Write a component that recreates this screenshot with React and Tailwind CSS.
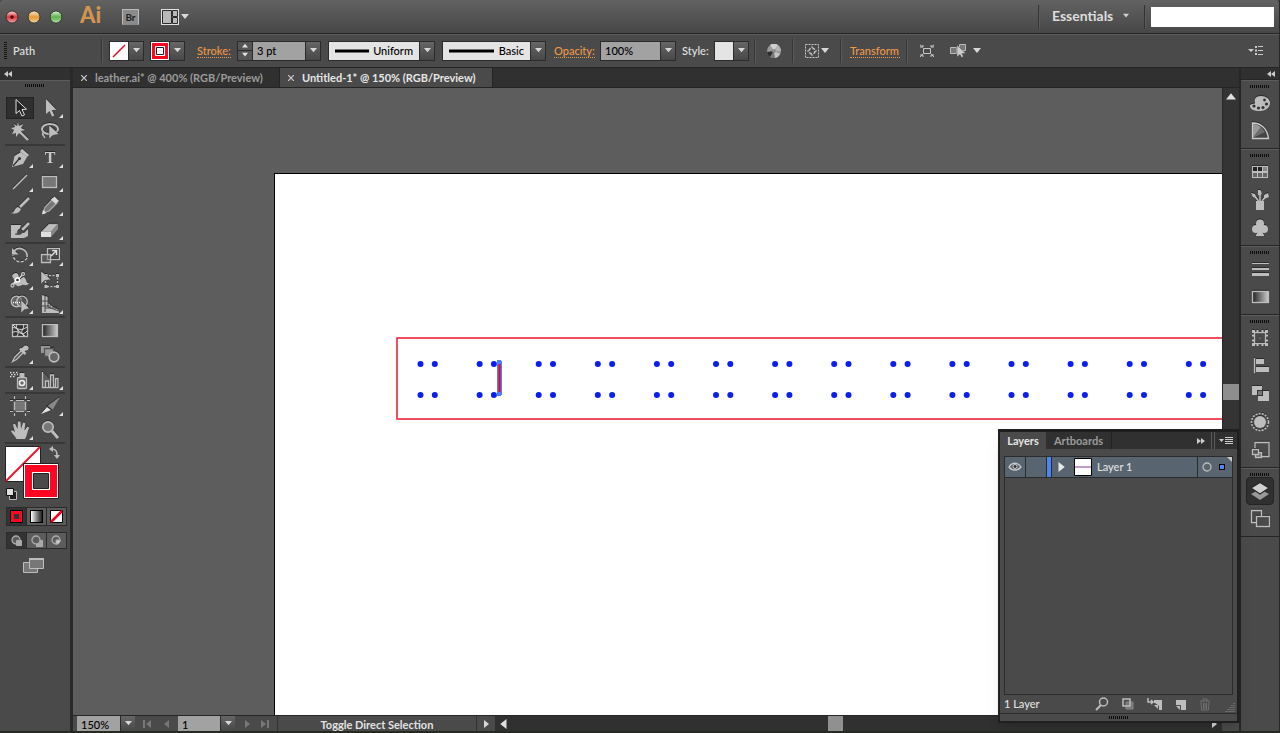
import React, { useState } from 'react';
import clsx from 'clsx';

const G = '#bdbdbd';

const TRIANGLES = {
  down: '0,1 8,1 4,6',
  up: '0,6 8,6 4,1',
  right: '2,0 7,4 2,8',
  left: '6,0 1,4 6,8',
};

const Tri = ({ dir = 'down', className = 'w-2 h-2 text-[#d8d8d8]' }) => (
  <svg viewBox="0 0 8 8" className={clsx('shrink-0', className)} fill="currentColor">
    <polygon points={TRIANGLES[dir]} />
  </svg>
);

// double arrow used to collapse a panel
const Collapse = ({ dir }) => (
  <svg viewBox="0 0 8 6" className={clsx('w-2 h-1.5 shrink-0', dir === 'right' && 'rotate-180')} fill="#ccc">
    <path d="M4 0v6L0 3zM8 0v6L4 3z" />
  </svg>
);

const Icon = ({ children, className = 'w-5 h-5' }) => (
  <svg
    viewBox="0 0 20 20"
    className={clsx('shrink-0 drop-shadow-[0_-1px_0_#2b2b2b]', className)}
    fill="none"
    stroke={G}
    strokeWidth="1.3"
  >
    {children}
  </svg>
);

// 20x20 drawings for the toolbox
const toolIcons = {
  selection: <path d="M6 1.500v14l3.500-3 2.500 5.500 2.500-1.200-2.500-5.300 4.500-.3z" fill="#222" stroke="#e0e0e0" strokeWidth="1" />,
  direct: <path d="M6 1v15l3.500-3 2.500 5.500 2.300-1-2.500-5.500 4.500-.3z" fill={G} stroke="none" />,
  wand: <><path d="M9 9l9 9" strokeWidth="2.200" /><path d="M8 0l1 4 4-2-2 4 4 2-4 1 1 4-3-2-3 4v-4l-4 1 2-4-3-2 4-1-1-3 3 2z" fill={G} stroke="none" /></>,
  lasso: <><ellipse cx="10" cy="7" rx="8" ry="5" strokeWidth="2" /><path d="M3.500 10c-3 3 2 4 1 6" strokeWidth="1.600" /><path d="M9 3v14l3.500-3.500 6.500-1.500z" fill={G} stroke="#444" strokeWidth=".5" /></>,
  pen: <><path d="M2 19l2.500-11 6.500-4 6 5-4 7z" fill={G} stroke="none" /><path d="M11 2l7 6" strokeWidth="3" /><path d="M3 18l6-7" stroke="#333" /><circle cx="9.500" cy="10.500" r="1.500" fill="#333" stroke="none" /></>,
  type: <text x="10" y="15" textAnchor="middle" fontSize="16" fontWeight="700" fontFamily="Liberation Serif, serif" fill="#c8c8c8" stroke="none">T</text>,
  line: <path d="M3 17L17 3" strokeWidth="1.500" />,
  rect: <rect x="2.500" y="4.500" width="14" height="11" fill="#777" />,
  brush: <><path d="M10 11L19 2" strokeWidth="2.500" /><path d="M1 17c4 0 3-5 7-6l3 2c-2 5-6 5-10 4z" fill={G} stroke="none" /></>,
  pencil: <><path d="M3 17l2-6 8-8 4 4-8 8z" fill="#777" stroke="#aaa" /><path d="M11 3.500l3.500-3 4.500 4.500-3.500 3z" fill="#d8d8d8" stroke="none" /><path d="M2 18.500l1-5 3.500 3.500z" fill="#ddd" stroke="none" /></>,
  blob: <><path d="M1 5h10l-2 6 5 2 4-4v7l-4 2H1z" fill={G} stroke="none" /><path d="M12 10l7-7" strokeWidth="2.500" /><path d="M5 14c4 1 1-5 5-5l3 2c-1 4-4 4-8 3z" fill="#4a4a4a" stroke="#333" strokeWidth=".5" /></>,
  eraser: <><path d="M1 12l8-8h9l-7 8z" fill={G} stroke="#888" strokeWidth=".5" /><path d="M1 12h10v5H1z" fill="#e0e0e0" stroke="none" /><path d="M11 12l7-8v5l-7 8z" fill="#888" stroke="none" /></>,
  rotate: <><path d="M4 5a7.500 7.500 0 0 1 13 6" strokeWidth="1.700" /><path d="M17 12a7.500 7.500 0 0 1-14-3" strokeDasharray="3 1.500" strokeWidth="1.500" /><path d="M2 2v6.500h6.500z" fill={G} stroke="none" /></>,
  scale: <><rect x="7.500" y="2.500" width="12" height="11" /><path d="M1.500 8.500h9v8h-9z" fill="#777" fillOpacity=".5" /><path d="M11 10l5-5M12 4.500h4.500V9" stroke="#e0e0e0" strokeWidth="1.500" /></>,
  width: <><path d="M2 6c3-5 7-3 7 2s4-4 6 0c2 3 1 5 4 5-2 4-5 1-7 2s-4 2-6 0-3 0-5-2c4 0 4-3 1-7z" fill={G} stroke="none" /><path d="M2 16L13 4" stroke="#e5e5e5" /><circle cx="7.500" cy="10" r="2" fill="#333" stroke="#fff" /><circle cx="2.500" cy="15.500" r="1.500" fill="#444" /><circle cx="13" cy="4" r="1.500" fill="#444" /></>,
  transform: <><rect x="5.500" y="5.500" width="12" height="11" strokeDasharray="2 1.500" /><path d="M4.500 4h3v3h-3zM16 4h3v3h-3zM4.500 15h3v3h-3zM16 15h3v3h-3z" fill={G} stroke="none" /><path d="M1 1v13l3.500-3.500 6.500-1z" fill={G} stroke="#444" strokeWidth=".5" /></>,
  shape: <><circle cx="6.500" cy="7.500" r="5.300" fill="#666" /><circle cx="12" cy="7.500" r="5.300" fill="#666" fillOpacity=".6" /><path d="M3 8.500h10" stroke="#fff" strokeDasharray="1 1" /><path d="M11 6v13l3.500-3.500 5-1z" fill={G} stroke="#444" strokeWidth=".5" /></>,
  perspective: <><path d="M2 1l6 2v6l5 4 6 3v3H2z" fill={G} stroke="none" /><path d="M5 2v16M2 7h6M2 12h9M8 3v10l11 4M5 14h12" stroke="#484848" strokeWidth="1" /></>,
  mesh: <><rect x="2.500" y="4.500" width="15" height="12" fill="#333" /><path d="M2 8c4-2 7 5 15-1M2 13c5-5 10 5 15-2M7 4c-3 5 4 6 0 12M13 4c3 5-5 7 1 12M3 5l5 5 7 6" stroke="#d8d8d8" strokeWidth="1" /></>,
  gradient: <><defs><linearGradient id="toolGrad"><stop stopColor="#222" /><stop offset="1" stopColor="#ccc" /></linearGradient></defs><rect x="2.500" y="4.500" width="15" height="12" fill="url(#toolGrad)" /></>,
  dropper: <><path d="M2.500 17.500l2-4 7-7 2 2-7 7z" fill="#555" stroke={G} /><path d="M10 4.500l5.500 5.500" strokeWidth="2.500" /><path d="M12 7l4-4" strokeWidth="4" /><circle cx="16" cy="4" r="2.500" fill={G} stroke="none" /></>,
  blend: <><rect x="1" y="2" width="9" height="7" fill="#999" stroke="none" /><path d="M4.500 4.500h9v8h-9z" fill="#999" stroke="#555" /><circle cx="14" cy="13" r="4.800" fill="#666" strokeWidth="1.700" /></>,
  spray: <><rect x="7.500" y="7.500" width="9" height="11" rx="1" fill="#666" /><rect x="9.500" y="3" width="5" height="4" fill={G} stroke="none" /><circle cx="12" cy="13" r="2.500" stroke="#eee" strokeWidth="1.600" /><path d="M0 2.500h8M1 4.500h7M0 6.500h6" stroke="#ddd" strokeDasharray="1.500 1.500" /></>,
  graph: <path d="M2.500 2v15.500h16M5.500 17v-6h3v6M10.500 17V5h3v12M15.500 17V8.500h2.500V17" fill="#777" fillOpacity=".6" />,
  artboard: <><rect x="4" y="5" width="12" height="10" fill="#777" stroke="#666" /><path d="M0 4.500h3M6 4.500h8M17 4.500h3M0 15.500h3M6 15.500h8M17 15.500h3M4.500 0v3M4.500 6v8M4.500 17v3M15.500 0v3M15.500 6v8M15.500 17v3" strokeWidth="1.200" /></>,
  slice: <><path d="M1 18l6-7 4 3z" fill="#e5e5e5" stroke="none" /><path d="M8 10L19 2l-7 12z" fill="#888" stroke="#aaa" strokeWidth=".5" /><path d="M7 10l5 4" stroke="#333" /></>,
  hand: <path d="M6.500 19c-1-3-4.500-5-5.500-8 1-1.300 2.500-.5 4 1.500L3 4.500l2-1L7.500 9 8 1.500h2.500L11 9l2-6.500 2.200.5L14.500 10.500 17.500 6.500l1.700 1c-2 4-2.200 8.500-4.200 11.500z" fill={G} stroke="none" />,
  zoom: <><circle cx="8" cy="7" r="5.200" fill="#777" strokeWidth="1.700" /><path d="M12 11l6 7" strokeWidth="3" /></>,
};

const toolGroups = [
  [['selection', false], ['direct', true], ['wand', false], ['lasso', false]],
  [['pen', true], ['type', true], ['line', true], ['rect', true], ['brush', false], ['pencil', true], ['blob', false], ['eraser', true]],
  [['rotate', true], ['scale', true], ['width', true], ['transform', false], ['shape', true], ['perspective', true]],
  [['mesh', false], ['gradient', false], ['dropper', true], ['blend', false]],
  [['spray', true], ['graph', true]],
  [['artboard', false], ['slice', true], ['hand', true], ['zoom', false]],
];

const dockIcons = {
  color: <><path d="M11 3c5 0 9 3 9 7s-4 8-10 8c-6 0-10-2-10-5s6-1 5-4 1-6 6-6z" fill={G} stroke="none" /><g fill="#333" stroke="none"><circle cx="4" cy="13" r="1.600" /><circle cx="8.500" cy="15" r="1.600" /><circle cx="13" cy="14.500" r="1.600" /><circle cx="16.500" cy="11" r="1.600" /><circle cx="14.500" cy="7" r="1.400" /></g></>,
  guide: <><path d="M2.500 2c9 0 15 6 16 15.500h-16z" fill="#444" stroke="#ccc" /><path d="M3 17V3c3 0 5 1 8 3z" fill="#999" stroke="none" /><path d="M3 17l8-11 4 5z" fill="#6c6c6c" stroke="none" /></>,
  swatches: <><rect x="2" y="4" width="16" height="12" fill={G} stroke="none" /><path d="M3 5h4v4H3zM8 5h4v4H8z" fill="#222" stroke="none" /><path d="M13 5h4v4h-4z" fill="#888" stroke="none" /><path d="M3 11h4v4H3zM8 11h4v4H8zM13 11h4v4h-4z" fill="#666" stroke="none" /></>,
  brushes: <><path d="M6 11h8v9H6z" fill={G} stroke="none" /><path d="M8.500 11L4 5M10 11V4M12 11l4-5" strokeWidth="1.600" /><path d="M1 3l4 1 1 4-3-1zM8 0c4-1 4 4 3 5L8 5zM14 5l4-2 1 4-5 2z" fill={G} stroke="none" /></>,
  symbols: <><circle cx="10" cy="5.500" r="4" fill={G} stroke="none" /><circle cx="6" cy="11" r="4" fill={G} stroke="none" /><circle cx="14" cy="11" r="4" fill={G} stroke="none" /><path d="M9 6h2v6l3 5v1H6v-1l3-5z" fill={G} stroke="none" /></>,
  stroke: <><path d="M2 4.500h17" strokeWidth="1" /><path d="M2 10h17" strokeWidth="2" /><path d="M2 15.500h17" strokeWidth="3" /></>,
  gradient: <rect x="2.500" y="4.500" width="16" height="11" fill="url(#toolGrad)" />,
  transform: <><rect x="4.500" y="4.500" width="11" height="11" /><path d="M2 2h3v3H2zM6.500 2h2v3h-2zM11.500 2h2v3h-2zM15 2h3v3h-3zM2 6.500h3v2H2zM2 11.500h3v2H2zM15 6.500h3v2h-3zM15 11.500h3v2h-3zM2 15h3v3H2zM6.500 15h2v3h-2zM11.500 15h2v3h-2zM15 15h3v3h-3z" fill={G} stroke="none" /><path d="M9.500 9.500h1v1h-1z" fill={G} stroke="none" /></>,
  align: <><path d="M4.500 2v15" /><path d="M6 3h8v5H6zM6 11h13v5H6z" fill={G} stroke="none" /></>,
  pathfinder: <><path d="M2 2h10v9H2zM8 7h11v10H8z" fill={G} stroke="none" /><rect x="7.500" y="6.500" width="5" height="5" fill="#777" stroke="#333" strokeWidth="1" /></>,
  appearance: <><circle cx="10" cy="10" r="8.500" strokeDasharray="2 1.200" strokeWidth="1.600" /><circle cx="10" cy="10" r="6" fill={G} stroke="none" /></>,
  styles: <><path d="M5 8V2.500h14v14h-8" /><rect x="5.500" y="12.500" width="6" height="5" fill="#777" /><rect x="2.500" y="9.500" width="6" height="5" fill="#555" /></>,
  layers: <><path d="M10 8l9 5-9 6-9-6z" fill="#999" stroke="none" /><path d="M10 1.500l9 5.500-9 6-9-6z" fill="#cfcfcf" stroke="#2c2c2c" /></>,
  artboards: <><path d="M1.500 1.500h10v12h-10z" /><rect x="6.500" y="7.500" width="13" height="10" fill="#4a4a4a" /></>,
};

const dockGroups = [
  ['color', 'guide'],
  ['swatches', 'brushes', 'symbols'],
  ['stroke', 'gradient'],
  ['transform', 'align', 'pathfinder', 'appearance', 'styles'],
  ['layers', 'artboards'],
];

const Grip = () => (
  <svg className="w-5 h-[3px] shrink-0" viewBox="0 0 20 3">
    <path d="M0 1.500h20" stroke="#0c0c0c" strokeWidth="3" strokeDasharray="1 1" />
  </svg>
);

const Divider = () => <div className="w-0.5 h-6 shrink-0 bg-[#353535] border-r border-[#5a5a5a]" />;

const ArrowButton = ({ label }) => (
  <button
    aria-label={label}
    className="w-[15px] self-stretch shrink-0 flex items-center justify-center border-l border-[#2b2b2b] bg-linear-to-b from-[#666] to-[#484848]"
  >
    <Tri className="w-[7px] h-[7px] text-[#d8d8d8]" />
  </button>
);

const box = 'flex h-5 shrink-0 border border-[#2b2b2b]';

const Swatch = ({ label, children }) => (
  <div className={box}>
    <button aria-label={label} className="w-[18px]">{children}</button>
    <ArrowButton label={`${label} options`} />
  </div>
);

const StrokeSelect = ({ label, value, className, thickness }) => (
  <div className={clsx(box, className)}>
    <div className="flex-1 min-w-0 flex items-center bg-[#e4e4e4] px-1.5">
      <svg className="flex-1 min-w-0 h-1" viewBox="0 0 40 4" preserveAspectRatio="none">
        <path d="M0 2h40" stroke="#000" strokeWidth={thickness} />
      </svg>
      <select aria-label={label} className="appearance-none bg-transparent text-black ml-1 text-right outline-none">
        <option>{value}</option>
      </select>
    </div>
    <ArrowButton label={`${label} list`} />
  </div>
);

const TitleBar = () => (
  <header className="h-[34px] shrink-0 flex items-center bg-linear-to-b from-[#626262] to-[#474747] border-b border-[#262626] rounded-t">
    <svg className="w-[66px] h-4 ml-1 shrink-0" viewBox="0 0 66 16">
      <defs>
        <linearGradient id="shine" x2="0" y2="1">
          <stop stopColor="#fff" stopOpacity=".75" />
          <stop offset=".5" stopColor="#fff" stopOpacity="0" />
          <stop offset="1" stopColor="#fff" stopOpacity=".5" />
        </linearGradient>
      </defs>
      {['#d83a40', '#e39a36', '#5fb04b'].map((c, i) => (
        <g key={c}>
          <circle cx={8 + i * 22} cy="8" r="6" fill={c} stroke="#333" />
          <circle cx={8 + i * 22} cy="8" r="5.500" fill="url(#shine)" />
        </g>
      ))}
      <circle cx="8" cy="8" r="1.800" fill="#5b0008" />
    </svg>
    <h1 className="w-[42px] pl-2.5 shrink-0 pb-1 font-black text-[22px] leading-6 text-[#d3944e]">Ai</h1>
    <button className="w-[17px] h-4 ml-2.5 shrink-0 border border-[#bbb] border-b-[#888] bg-[#8b8b8b] text-[#222] text-[10px] leading-3 font-bold">
      Br
    </button>
    <button aria-label="Arrange documents" className="flex items-center gap-0.5 ml-[22px]">
      <svg className="w-[18px] h-4" viewBox="0 0 18 16">
        <path d="M0 0h18v16H0z" fill="#e0e0e0" />
        <path d="M1.500 1.500h9v13h-9zM11.500 1.500h5v6h-5zM11.500 8.500h5v6h-5z" fill="#b8b8b8" stroke="#2b2b2b" />
      </svg>
      <Tri />
    </button>
    <div className="flex-1" />
    <Divider />
    <button className="flex items-center gap-2.5 w-[104px] pl-3 pb-0.5 font-bold text-[14px] text-[#dedede]">
      Essentials
      <Tri className="w-1.5 h-1.5 text-[#d0d0d0]" />
    </button>
    <Divider />
    <input aria-label="Search" className="w-[123px] h-5 ml-[5px] mr-[5px] bg-white text-black px-2 outline-none" />
  </header>
);

const ControlBar = () => (
  <div className="h-[34px] shrink-0 flex items-center pb-px bg-[#4a4a4a] border-t border-[#5d5d5d] border-b border-b-[#262626]">
    <svg className="w-[3px] h-[18px] ml-1 shrink-0" viewBox="0 0 3 18">
      <path d="M1.500 0v18" stroke="#141414" strokeWidth="3" strokeDasharray="1 1" />
    </svg>
    <span className="w-[94px] pl-1.5 shrink-0">Path</span>
    <Divider />
    <div className="flex gap-1.5 pl-1.5 w-[94px] shrink-0">
      <Swatch label="Fill">
        <svg viewBox="0 0 18 18" className="w-full h-full bg-white"><path d="M3 15L15 3" stroke="#f0001e" strokeWidth="1.500" /></svg>
      </Swatch>
      <Swatch label="Stroke colour">
        <svg viewBox="0 0 18 18" className="w-full h-full bg-white">
          <path d="M1 1h16v16H1z" fill="#ff0522" />
          <path d="M4 4h10v10H4z" fill="#fff" />
          <path d="M5.500 5.500h7v7h-7z" fill="#fff" stroke="#222" />
        </svg>
      </Swatch>
    </div>
    <div className="w-10 shrink-0">
      <label htmlFor="weight" className="text-[#f09848] border-b border-dotted border-[#f09848]">Stroke:</label>
    </div>
    <div className={clsx(box, 'w-[84px]')}>
      <div className="w-[15px] flex flex-col border-r border-[#2b2b2b] bg-[#555]">
        <button aria-label="Increase" className="flex-1 flex items-center justify-center border-b border-[#2b2b2b]"><Tri dir="up" className="w-1.5 h-1.5" /></button>
        <button aria-label="Decrease" className="flex-1 flex items-center justify-center"><Tri className="w-1.5 h-1.5" /></button>
      </div>
      <input id="weight" defaultValue="3 pt" className="flex-1 min-w-0 bg-[#a2a2a2] text-black pl-1 outline-none" />
      <ArrowButton label="Stroke weights" />
    </div>
    <StrokeSelect label="Width profile" value="Uniform" thickness="3" className="w-[107px] ml-[7px]" />
    <StrokeSelect label="Brush definition" value="Basic" thickness="3" className="w-[104px] ml-[7px]" />
    <div className="w-[46px] ml-2 shrink-0">
      <label htmlFor="opacity" className="text-[#f09848] border-b border-dotted border-[#f09848]">Opacity:</label>
    </div>
    <div className={clsx(box, 'w-[76px]')}>
      <input id="opacity" defaultValue="100%" className="flex-1 min-w-0 bg-[#a2a2a2] text-black pl-1 outline-none" />
      <ArrowButton label="Opacity values" />
    </div>
    <span className="w-8 ml-1.5 shrink-0">Style:</span>
    <Swatch label="Style"><span className="block h-full bg-[#e4e4e4]" /></Swatch>
    <div className="flex items-center gap-[11px] ml-[5px]">
      <Divider />
      <button aria-label="Recolor artwork">
        <svg viewBox="0 0 14 14" className="w-3.5 h-3.5">
          <circle cx="7" cy="7" r="7" fill="#999" />
          <path d="M7 7L3 1A7 7 0 0 1 11 1z" fill="#d0d0d0" />
          <path d="M7 7l4-6a7 7 0 0 1 3 6z" fill="#b4b4b4" />
          <path d="M7 7L0 8a7 7 0 0 0 3 5z" fill="#2c2c2c" />
          <path d="M7 7L3 13a7 7 0 0 0 5 1z" fill="#777" />
          <path d="M7 7l1 7a7 7 0 0 0 5-4z" fill="#c4c4c4" />
          <circle cx="7" cy="7" r="2" fill="#8d8d8d" />
        </svg>
      </button>
      <Divider />
      <button aria-label="Align to" className="flex items-center gap-0.5">
        <svg viewBox="0 0 14 14" className="w-3.5 h-3.5" fill="none" stroke="#c8c8c8">
          <path d="M.5 .5h13v13H.5z" strokeDasharray="2 1" />
          <circle cx="7" cy="7" r="3" strokeWidth="1.500" strokeDasharray="3 1.700" />
          <path d="M7 2v2M7 10v2M2 7h2M10 7h2" />
        </svg>
        <Tri />
      </button>
      <Divider />
    </div>
    <a href="#transform" className="w-[50px] ml-2 shrink-0 leading-[13px] text-[#f09848] border-b border-dotted border-[#f09848]">Transform</a>
    <div className="flex items-center ml-1.5">
      <Divider />
      <button aria-label="Isolate" className="ml-3">
        <svg viewBox="0 0 14 14" className="w-3.5 h-3.5" fill="none" stroke="#c8c8c8">
          <path d="M3.500 4.500h7v5h-7zM0 1l3 2M14 1l-3 2M0 13l3-3M14 13l-3-3M3 1v2H0M11 1v2h3M3 13v-2H0M11 13v-2h3" />
        </svg>
      </button>
      <button aria-label="Select similar" className="ml-4 flex items-center gap-1.5">
        <svg viewBox="0 0 17 16" className="w-[17px] h-4" fill="#777" stroke="#bbb">
          <path d="M.5 4.500h6v6h-6zM9.500 1.500h6v6h-6z" />
          <path d="M7 2v12l3-2.500 1.500 3 2-1-1.500-3h4z" fill="#ccc" stroke="#444" strokeWidth=".5" />
        </svg>
        <Tri />
      </button>
    </div>
    <div className="flex-1" />
    <button aria-label="Control menu" className="mr-4">
      <svg viewBox="0 0 15 9" className="w-[15px] h-[9px]" fill="#ccc">
        <path d="M0 3h6L3 6zM7 0h2v2H7zM7 3.500h2v2H7zM7 7h2v2H7zM10 0h5v1h-5zM10 4h5v1h-5zM10 8h5v1h-5z" />
      </svg>
    </button>
  </div>
);

const Toolbox = () => {
  const [active, setActive] = useState('selection');

  return (
    <aside className="w-[73px] shrink-0 flex flex-col bg-[#4a4a4a] border-r-3 border-[#292929]">
      <div className="h-3 shrink-0 bg-[#303030] flex items-center pl-1">
        <Collapse />
      </div>
      <div className="h-4 shrink-0 flex items-center justify-center border-t border-[#5c5c5c] pb-1.5"><Grip /></div>
      {toolGroups.map((group) => (
        <div key={group[0][0]} className="mx-[5px] grid grid-cols-2 border-b-2 border-[#383838]">
          {group.map(([name, more]) => (
            <button
              key={name}
              aria-label={name}
              onClick={() => setActive(name)}
              className="h-6 relative flex items-center justify-center"
            >
              <span className={clsx('flex items-center justify-center w-7 h-[22px]', active === name && 'bg-[#2f2f2f] border border-[#232323]')}>
                <Icon>{toolIcons[name]}</Icon>
              </span>
              {more && (
                <svg className="absolute right-0.5 bottom-0.5 w-1 h-1" viewBox="0 0 4 4"><path d="M4 0v4H0z" fill="#e0e0e0" /></svg>
              )}
            </button>
          ))}
        </div>
      ))}
      <button aria-label="Fill and stroke" className="ml-1 mt-px">
        <svg viewBox="0 0 58 56" className="w-[58px] h-14">
          <path d="M1.500 1.500h35v35h-35z" fill="#fff" stroke="#222" />
          <path d="M2 36L36 2" stroke="#f0142c" strokeWidth="2" />
          <path d="M19.500 18.500h35v35h-35z" fill="#fff" stroke="#222" />
          <path d="M21 20h32v32H21z" fill="#ff0522" />
          <path d="M28 27h18v18H28z" fill="#fff" />
          <path d="M29.500 28.500h15v15h-15z" fill="#4a4a4a" stroke="#222" />
          <path d="M47 4c5 0 6 2 6 7" fill="none" stroke={G} strokeWidth="1.500" />
          <path d="M45 4l4-3v6zM50 10h6l-3 4z" fill={G} />
          <path d="M5.500 46.500h7v8h-7z" fill="#222" stroke={G} />
          <path d="M2.500 43.500h7v7h-7z" fill="#e0e0e0" stroke="#111" />
        </svg>
      </button>
      <div className="flex ml-1.5 mt-1.5 w-[61px] h-[19px] border border-[#2b2b2b] divide-x divide-[#2b2b2b] bg-[#5c5c5c]">
        <button aria-label="Color" className="flex-1 flex items-center justify-center bg-[#333]">
          <svg viewBox="0 0 13 13" className="w-[13px] h-[13px]"><path d="M.5.5h12v12H.5z" fill="#ff0522" stroke="#000" /><path d="M4 4h5v5H4z" fill="#333" /></svg>
        </button>
        <button aria-label="Gradient" className="flex-1 flex items-center justify-center">
          <span className="w-[13px] h-[13px] border border-black bg-linear-to-r from-white to-[#222]" />
        </button>
        <button aria-label="None" className="flex-1 flex items-center justify-center">
          <svg viewBox="0 0 13 13" className="w-[13px] h-[13px]"><path d="M.5.5h12v12H.5z" fill="#fff" stroke="#000" /><path d="M1 12l11-11" stroke="#f0001e" strokeWidth="2.500" /></svg>
        </button>
      </div>
      <div className="flex ml-1.5 mt-1.5 w-[61px] h-[17px] border border-[#2b2b2b] divide-x divide-[#2b2b2b] bg-[#5c5c5c]">
        {['normal', 'behind', 'inside'].map((mode) => (
          <button key={mode} aria-label={`Draw ${mode}`} className={clsx('flex-1 flex items-center justify-center', mode === 'normal' && 'bg-[#333]')}>
            <svg viewBox="0 0 12 12" className="w-3 h-3" fill="#5c5c5c" stroke="#aaa">
              {mode === 'behind' && <path d="M5.500 5.500h6v6h-6z" fill="#aaa" />}
              <circle cx="5" cy="5" r="4" strokeWidth="1.300" />
              {mode === 'normal' && <path d="M5.500 5.500h5v5h-5z" fill="#aaa" />}
              {mode === 'inside' && <path d="M5 5h4v2L7 9H5z" fill="#ccc" />}
            </svg>
          </button>
        ))}
      </div>
      <button aria-label="Screen mode" className="ml-[23px] mt-2 self-start">
        <svg viewBox="0 0 21 17" className="w-[21px] h-[17px]" fill="#777" stroke={G}>
          <path d="M.5 5.500h14v10H.5z" />
          <path d="M6.500 1.500h14v10h-14z" />
          <path d="M6 2h15" strokeWidth="2" />
        </svg>
      </button>
    </aside>
  );
};

const tabs = ['leather.ai* @ 400% (RGB/Preview)', 'Untitled-1* @ 150% (RGB/Preview)'];

const DocumentTabs = () => (
  <nav className="h-5 shrink-0 flex bg-[#303030] border-b border-[#242424]">
    {tabs.map((tab, i) => (
      <div
        key={tab}
        className={clsx(
          'flex items-center gap-2 pl-2 border-r border-[#242424]',
          i === 0 ? 'w-[207px] text-[#9b9b9b]' : 'w-[213px] bg-[#4a4a4a] text-[#e6e6e6]'
        )}
      >
        <button aria-label="Close">
          <svg viewBox="0 0 6 6" className="w-1.5 h-1.5" stroke="#ccc" strokeWidth="1.200"><path d="M0 0l6 6M6 0L0 6" /></svg>
        </button>
        <button className="font-bold whitespace-nowrap">{tab}</button>
      </div>
    ))}
  </nav>
);

const Artwork = () => (
  <svg className="w-full h-full" viewBox="275 174 947 541" preserveAspectRatio="xMinYMin slice">
    <path d="M1230 338H397v81h833" fill="none" stroke="#f0142c" strokeWidth="1.500" />
    {Array.from({ length: 14 }, (_, i) => (
      <g key={i} fill="#0a1ef0">
        {[364, 395].map((y) => (
          <React.Fragment key={y}>
            <circle cx={420.5 + i * 59.1} cy={y} r="3" />
            <circle cx={434.8 + i * 59.1} cy={y} r="3" />
          </React.Fragment>
        ))}
      </g>
    ))}
    <path d="M499.500 361v34" stroke="#4a7dff" strokeWidth="5" />
    <path d="M499.500 364v28" stroke="#f0001e" strokeWidth="2" />
    <path d="M497 360h4v4h-4zM497 392h4v4h-4z" fill="#4a7dff" />
  </svg>
);

const StatusBar = () => (
  <footer className="h-4 shrink-0 flex bg-[#4a4a4a] border-t border-[#262626]">
    <div className="flex w-[58px] ml-1 shrink-0">
      <input aria-label="Zoom level" defaultValue="150%" className="flex-1 min-w-0 bg-[#a2a2a2] text-black pl-1 pt-0.5 outline-none" />
      <ArrowButton label="Zoom levels" />
    </div>
    <div className="w-[43px] shrink-0 flex items-center justify-center gap-2.5 text-[#777]">
      <button aria-label="First artboard" className="flex border-l-2 border-[#777]"><Tri dir="left" className="w-2 h-2" /></button>
      <button aria-label="Previous artboard"><Tri dir="left" className="w-2 h-2" /></button>
    </div>
    <div className="flex w-[57px] shrink-0">
      <input aria-label="Artboard" defaultValue="1" className="flex-1 min-w-0 bg-[#a2a2a2] text-black pl-1 pt-0.5 outline-none" />
      <ArrowButton label="Artboards" />
    </div>
    <div className="w-[42px] shrink-0 flex items-center justify-center gap-2 text-[#777]">
      <button aria-label="Next artboard"><Tri dir="right" className="w-2 h-2" /></button>
      <button aria-label="Last artboard" className="flex border-r-2 border-[#777]"><Tri dir="right" className="w-2 h-2" /></button>
    </div>
    <div className="w-[200px] shrink-0 border-x border-[#333] flex items-center justify-center pt-0.5 font-bold">
      Toggle Direct Selection
    </div>
    <button aria-label="Status menu" className="w-[18px] shrink-0 flex items-center justify-center"><Tri dir="right" /></button>
    <div className="flex-1 flex items-center bg-[#303030]">
      <button aria-label="Scroll left" className="pl-1"><Tri dir="left" className="w-2.5 h-2.5 text-[#e0e0e0]" /></button>
      <div className="grow-[20]" />
      <div className="w-[15px] h-full bg-[#909090]" />
      <div className="grow-[23]" />
      <button aria-label="Scroll right" className="pr-1"><Tri dir="right" /></button>
    </div>
    <div className="w-[17px] shrink-0" />
  </footer>
);

const LayersPanel = () => (
  <section className="absolute right-0 bottom-2 w-[241px] h-[294px] flex flex-col bg-[#4a4a4a] border-2 border-t-3 border-[#1f1f1f] shadow-lg">
    <div className="h-[17px] shrink-0 flex bg-[#303030] font-bold">
      <button className="w-[46px] bg-[#4a4a4a] text-[#e6e6e6]">Layers</button>
      <button className="w-[66px] text-[#9b9b9b] border-r border-[#222]">Artboards</button>
      <div className="flex-1" />
      <button aria-label="Collapse" className="flex items-center pr-1.5 mr-0.5 border-r border-[#5a5a5a]">
        <Collapse dir="right" />
      </button>
      <button aria-label="Panel menu" className="px-1 border-l border-[#5a5a5a]">
        <svg viewBox="0 0 14 9" className="w-3.5 h-[9px]" fill="#ccc"><path d="M0 3h5L2.500 6zM6 1h8v1H6zM6 3h8v1H6zM6 5h8v1H6zM6 7h8v1H6z" /></svg>
      </button>
    </div>
    <div className="flex-1 mx-1 mt-[7px] border border-[#2b2b2b]">
      <div className="h-[21px] flex items-center bg-[#586470] border-b border-[#2b2b2b]">
        <button aria-label="Visibility" className="w-[21px] h-full flex items-center justify-center border-r border-[#2b2b2b]">
          <svg viewBox="0 0 14 10" className="w-3.5 h-2.5" fill="none" stroke="#c8c8c8">
            <path d="M1 5c3-5 9-5 12 0-3 4-9 4-12 0z" strokeWidth="1.300" /><circle cx="7" cy="4.500" r="2" fill="#333" />
          </svg>
        </button>
        <span className="w-[21px] h-full border-r border-[#2b2b2b]" />
        <span className="w-1 h-full bg-[#4b85f5] border-r border-[#2b2b2b] box-content" />
        <button aria-label="Expand" className="ml-1"><Tri dir="right" className="w-2.5 h-2.5 text-[#e8e8e8]" /></button>
        <svg viewBox="0 0 18 18" className="w-[18px] h-[18px] ml-2"><path d="M.5.5h17v17H.5z" fill="#fff" stroke="#000" /><path d="M1 9h16" stroke="#c49bc9" strokeWidth="2" /></svg>
        <span className="flex-1 ml-[5px]">Layer 1</span>
        <span className="w-[35px] h-full border-l border-[#2b2b2b] flex items-center gap-[7px] pl-1 relative">
          <svg viewBox="0 0 10 10" className="w-2.5 h-2.5" fill="none" stroke="#bbb" strokeWidth="1.300"><circle cx="5" cy="5" r="4" /></svg>
          <span className="w-1.5 h-1.5 bg-[#4b85f5] border border-black" />
          <svg viewBox="0 0 5 5" className="absolute top-0 right-0 w-[5px] h-[5px]"><path d="M0 0h5v5z" fill="#ccc" /></svg>
        </span>
      </div>
    </div>
    <div className="h-[18px] shrink-0 flex items-center pl-1 pr-0.5">
      <span className="flex-1">1 Layer</span>
      <div className="flex gap-3">
        <button aria-label="Locate object"><svg viewBox="0 0 14 14" className="w-3.5 h-3.5" fill="none" stroke={G} strokeWidth="1.500"><circle cx="8.500" cy="5" r="4" /><path d="M6 8l-5 5" strokeWidth="2" /></svg></button>
        <button aria-label="Clipping mask"><svg viewBox="0 0 14 14" className="w-3.5 h-3.5" stroke={G}><path d="M5 5h7v7H5z" fill="#777" stroke="#888" /><path d="M2 2h7v7H2z" fill="none" strokeWidth="1.500" /></svg></button>
        <button aria-label="New sublayer"><svg viewBox="0 0 16 14" className="w-4 h-3.5" fill={G}><path d="M7 3h8v10h-3V9L8 6H7z" /><path d="M1 1v4h5M4 3l2 2-2 2" fill="none" stroke={G} strokeWidth="1.500" /><path d="M7 8h4v4z" /></svg></button>
        <button aria-label="New layer"><svg viewBox="0 0 12 14" className="w-3 h-3.5" fill={G}><path d="M1 3h10v10H6V8H1zM1 9h4v4z" /></svg></button>
        <button aria-label="Delete"><svg viewBox="0 0 12 14" className="w-3 h-3.5" fill="none" stroke="#6e6e6e"><path d="M1 4h10M4 4V2h4v2M2 5l.5 8h7l.5-8M4.500 6v6M6 6v6M7.500 6v6" /></svg></button>
      </div>
      <svg viewBox="0 0 10 10" className="w-2.5 h-2.5 ml-3.5 self-end"><path d="M9 0v10M7 2v8M5 4v6M3 6v4M1 8v2" stroke="#888" strokeDasharray="1 1" /></svg>
    </div>
    <div className="h-2 shrink-0 flex items-center justify-center border-t border-[#2b2b2b]"><Grip /></div>
  </section>
);

const Dock = () => (
  <aside className="w-10 shrink-0 flex flex-col bg-[#4a4a4a] border-l-2 border-[#262626]">
    <div className="h-[11px] shrink-0 flex items-center justify-end bg-[#303030] pr-1">
      <Collapse />
    </div>
    {dockGroups.map((group) => (
      <div key={group[0]} className="flex flex-col items-center border-t border-[#262626] pb-[3px]">
        <div className="h-[9px] flex items-center self-stretch justify-center pt-0.5 border-t border-[#5c5c5c]"><Grip /></div>
        {group.map((name) => (
          <button
            key={name}
            aria-label={name}
            className={clsx('w-7 h-7 flex items-center justify-center', name === 'layers' && 'bg-[#303030] border border-[#242424] rounded-sm')}
          >
            <Icon>{dockIcons[name]}</Icon>
          </button>
        ))}
      </div>
    ))}
    <div className="border-t border-[#262626]" />
  </aside>
);

export default function App() {
  return (
    <div className="h-screen bg-[#26291f] pr-px pb-0.5">
      <div className="h-full flex flex-col bg-[#4a4a4a] overflow-hidden text-[11px] leading-[14px] font-medium text-[#e2e2e2] font-['Lato','Open_Sans',sans-serif]">
        <TitleBar />
        <ControlBar />
        <div className="flex-1 min-h-0 flex">
          <Toolbox />
          <main className="flex-1 min-w-0 flex flex-col relative">
            <DocumentTabs />
            <div className="flex-1 min-h-0 flex">
              <div className="flex-1 min-w-0 bg-[#5d5d5d] pl-[201px] pt-[85px]">
                <div className="h-full bg-white border-l border-t border-black overflow-hidden">
                  <Artwork />
                </div>
              </div>
              <div className="w-[17px] shrink-0 flex flex-col items-center bg-[#343434] border-l border-[#262626]">
                <button aria-label="Scroll up" className="h-[18px]"><Tri dir="up" className="w-2.5 h-2.5 text-[#e0e0e0]" /></button>
                <div className="h-[278px]" />
                <div className="w-full h-4 bg-[#8e8e8e]" />
              </div>
            </div>
            <StatusBar />
            <LayersPanel />
          </main>
          <Dock />
        </div>
      </div>
    </div>
  );
}
